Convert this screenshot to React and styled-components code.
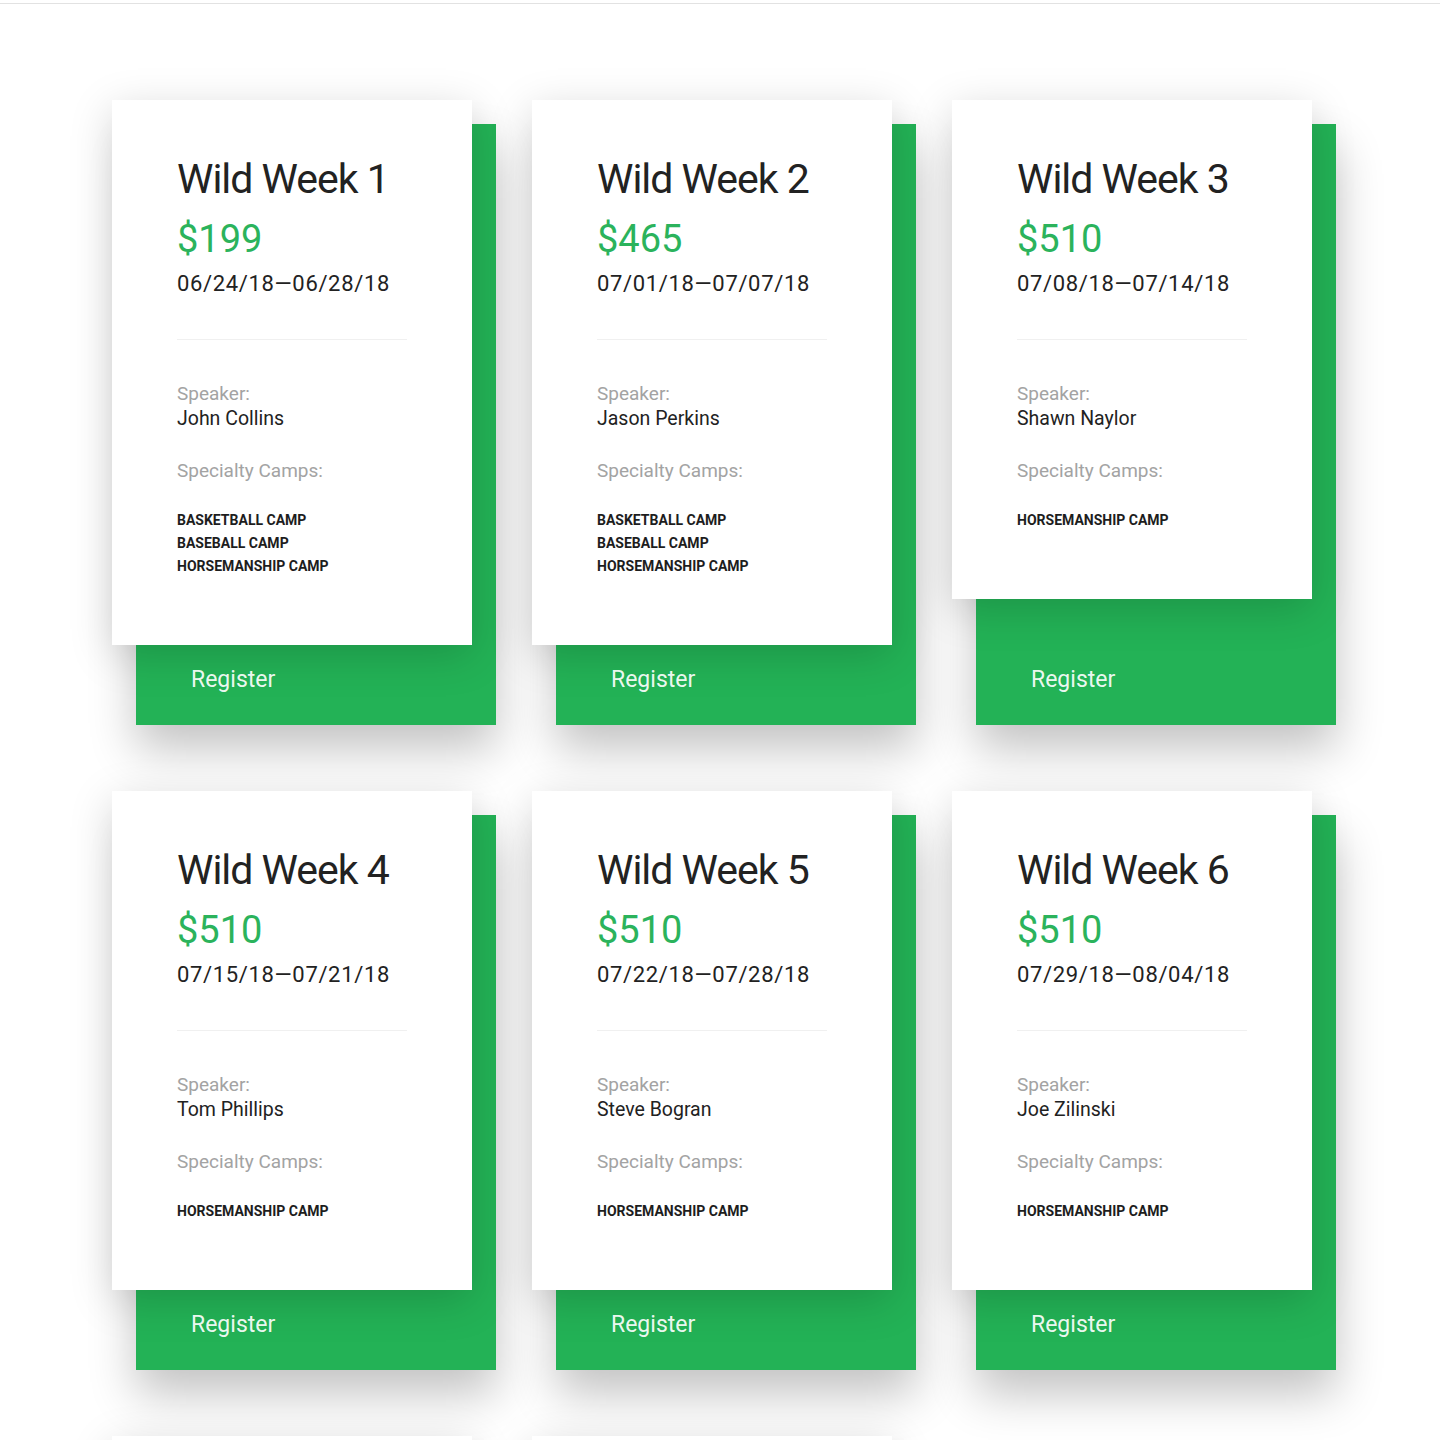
import styled, { createGlobalStyle } from 'styled-components';

const weeks = [
  { name: 'Wild Week 1', price: '$199', dates: '06/24/18—06/28/18', speaker: 'John Collins', camps: ['Basketball Camp', 'Baseball Camp', 'Horsemanship Camp'] },
  { name: 'Wild Week 2', price: '$465', dates: '07/01/18—07/07/18', speaker: 'Jason Perkins', camps: ['Basketball Camp', 'Baseball Camp', 'Horsemanship Camp'] },
  { name: 'Wild Week 3', price: '$510', dates: '07/08/18—07/14/18', speaker: 'Shawn Naylor', camps: ['Horsemanship Camp'] },
  { name: 'Wild Week 4', price: '$510', dates: '07/15/18—07/21/18', speaker: 'Tom Phillips', camps: ['Horsemanship Camp'] },
  { name: 'Wild Week 5', price: '$510', dates: '07/22/18—07/28/18', speaker: 'Steve Bogran', camps: ['Horsemanship Camp'] },
  { name: 'Wild Week 6', price: '$510', dates: '07/29/18—08/04/18', speaker: 'Joe Zilinski', camps: ['Horsemanship Camp'] },
  { name: 'Wild Week 7', price: '$510', dates: '08/05/18—08/11/18', speaker: 'Jason Perkins', camps: ['Horsemanship Camp'] },
  { name: 'Wild Week 8', price: '$510', dates: '08/12/18—08/18/18', speaker: 'John Collins', camps: ['Horsemanship Camp'] },
];

const App = () => (
  <>
    <GlobalStyle />
    <TopBar />
    <StyledGrid>
      {weeks.map((week) => (
        <StyledWeek key={week.name}>
          <StyledCard>
            <StyledTitle>{week.name}</StyledTitle>
            <StyledPrice>{week.price}</StyledPrice>
            <StyledDates>{week.dates}</StyledDates>
            <StyledDivider />
            <StyledLabel>Speaker:</StyledLabel>
            <StyledSpeaker>{week.speaker}</StyledSpeaker>
            <StyledLabel spaced>Specialty Camps:</StyledLabel>
            <StyledCampList>
              {week.camps.map((camp) => (
                <li key={camp}>{camp}</li>
              ))}
            </StyledCampList>
          </StyledCard>
          <StyledRegister href="#register">Register</StyledRegister>
        </StyledWeek>
      ))}
    </StyledGrid>
  </>
);

const GlobalStyle = createGlobalStyle`
  body {
    margin: 0;
    background: #fff;
    font-family: Roboto, 'Liberation Sans', sans-serif;
    color: #222;
  }
`;

const TopBar = styled.header`
  height: 3px;
  border-bottom: 1px solid #e2e2e2;
`;

const StyledGrid = styled.main`
  display: grid;
  grid-template-columns: repeat(3, 360px);
  column-gap: 60px;
  row-gap: 90px;
  margin: 120px 0 120px 136px;
`;

const StyledWeek = styled.article`
  display: flex;
  flex-direction: column;
  background: #23b256;
  box-shadow: 0 24px 44px rgba(0, 0, 0, 0.24);
`;

const StyledCard = styled.div`
  margin: -24px 24px 0 -24px;
  padding: 55px 65px 67px;
  background: #fff;
  box-shadow: 0 10px 40px rgba(0, 0, 0, 0.17);
`;

const StyledTitle = styled.h2`
  margin: 0 0 13px;
  font-size: 41px;
  line-height: 1.2;
  font-weight: 400;
  letter-spacing: -1px;
  color: #222;
`;

const StyledPrice = styled.div`
  font-size: 38px;
  line-height: 1.2;
  color: #2bb35c;
`;

const StyledDates = styled.div`
  margin-top: 8px;
  font-size: 22px;
  line-height: 1.2;
  letter-spacing: 0.65px;
  color: #222;
`;

const StyledDivider = styled.hr`
  margin: 42px 0 41px;
  border: none;
  border-top: 1px solid #f0f0f0;
`;

const StyledLabel = styled.div`
  margin-top: ${(props) => (props.spaced ? '27px' : '0')};
  font-size: 19px;
  line-height: 25px;
  font-weight: 400;
  color: #a3a3a3;
`;

const StyledSpeaker = styled.div`
  font-size: 19.5px;
  line-height: 25px;
  color: #222;
`;

const StyledCampList = styled.ul`
  margin: 26px 0 0;
  padding: 0;
  list-style: none;
  li {
    font-size: 14px;
    line-height: 23px;
    font-weight: 700;
    text-transform: uppercase;
    color: #1d1d1d;
  }
`;

const StyledRegister = styled.a`
  margin-top: auto;
  padding: 21px 55px 31px;
  font-size: 23px;
  line-height: 28px;
  color: rgba(255, 255, 255, 0.93);
  text-decoration: none;
`;

export default App;
